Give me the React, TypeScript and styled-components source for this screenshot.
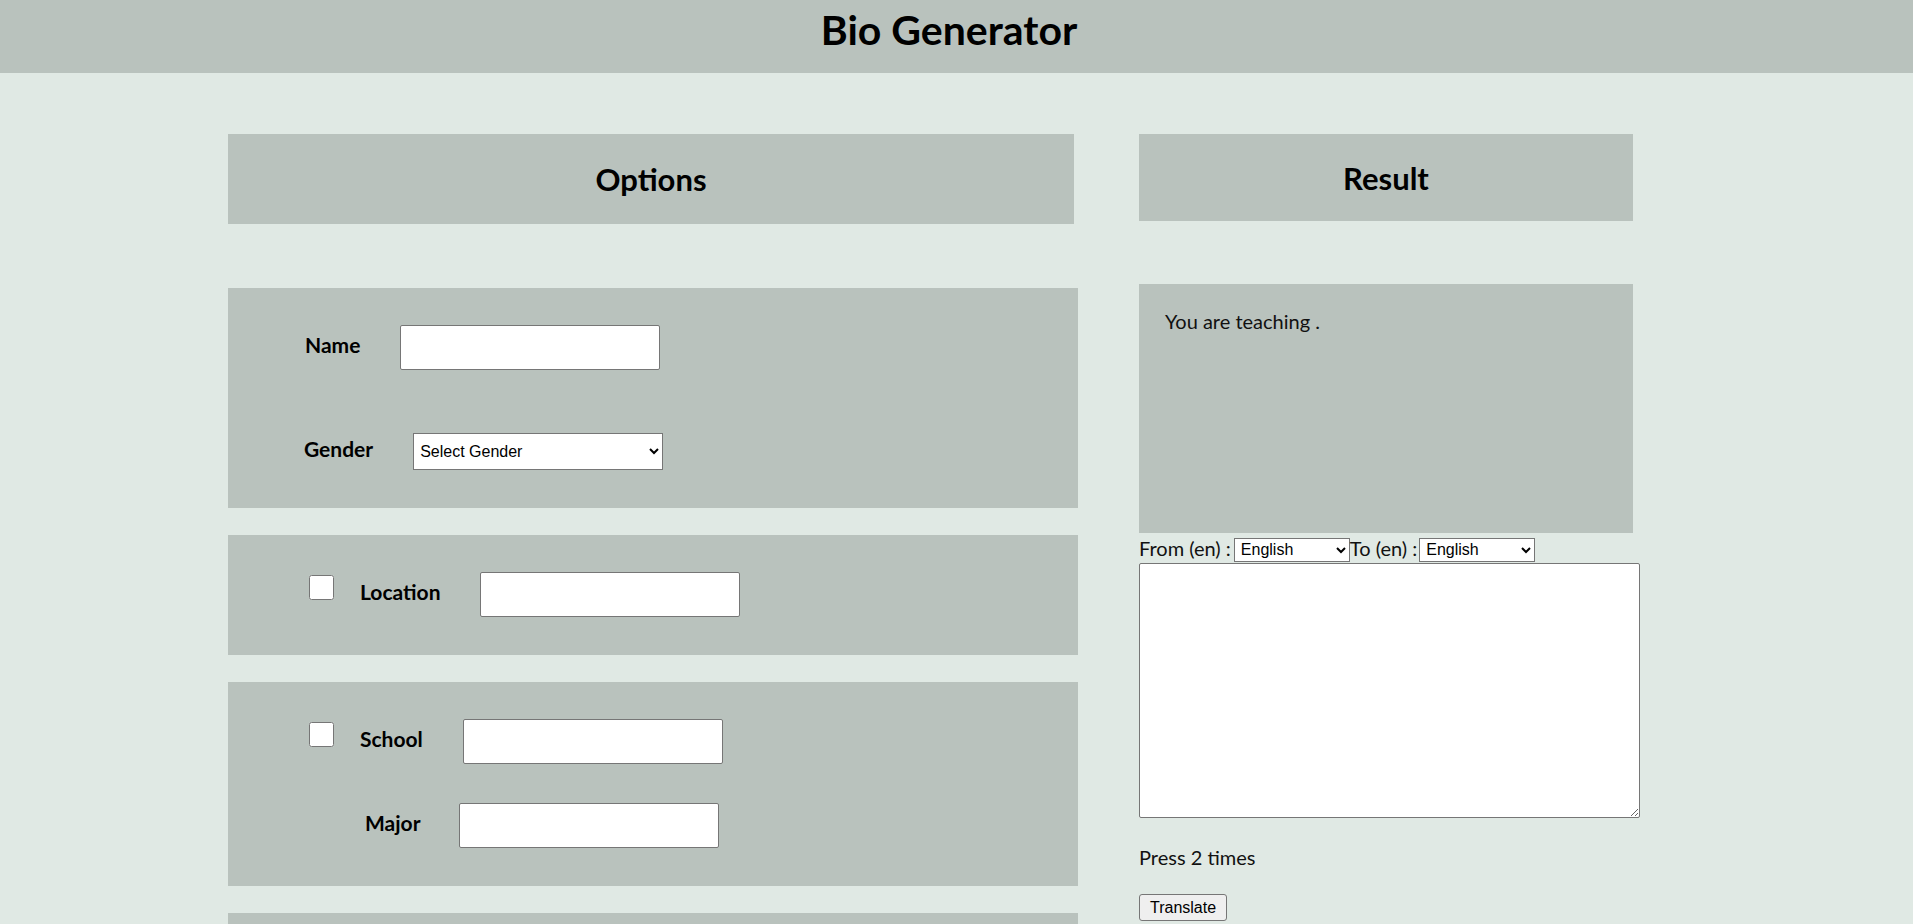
import React from "react";
import styled, { createGlobalStyle } from "styled-components";

const GlobalStyle = createGlobalStyle`
  html, body {
    margin: 0;
    padding: 0;
    background: #e0e9e4;
  }
  body {
    font-family: Lato, "Open Sans", sans-serif;
    color: #111;
  }
  * { box-sizing: border-box; }
`;

const Header = styled.header`
  height: 73px;
  background: #b9c2bd;
  display: flex;
  justify-content: center;
  align-items: flex-start;
  padding-right: 15px;
`;

const Title = styled.h1`
  margin: 0;
  padding-top: 5px;
  font-family: Lato, sans-serif;
  font-weight: 700;
  font-size: 41px;
  line-height: 50px;
  color: #000;
`;

const Main = styled.main`
  display: flex;
  align-items: flex-start;
  gap: 61px;
  padding: 61px 0 120px 228px;
`;

const LeftCol = styled.section`
  width: 850px;
  display: flex;
  flex-direction: column;
  gap: 27px;
`;

const RightCol = styled.section`
  width: 494px;
  display: flex;
  flex-direction: column;
  align-items: flex-start;
`;

const SectionHead = styled.h2<{ $w?: number; $h: number; $mb: number }>`
  margin: 0 0 ${(p) => p.$mb}px 0;
  width: ${(p) => (p.$w ? `${p.$w}px` : "100%")};
  height: ${(p) => p.$h}px;
  background: #b9c2bd;
  display: flex;
  align-items: center;
  justify-content: center;
  font-family: Lato, sans-serif;
  font-weight: 700;
  font-size: 31px;
  color: #000;
`;

const Panel = styled.div`
  background: #b9c2bd;
  padding: 37px 0 38px 0;
  display: flex;
  flex-direction: column;
`;

const Row = styled.div<{ $pl: number; $mt?: number }>`
  display: flex;
  align-items: center;
  padding-left: ${(p) => p.$pl}px;
  margin-top: ${(p) => p.$mt ?? 0}px;
`;

const Label = styled.label<{ $mr?: number }>`
  font-family: Lato, sans-serif;
  font-weight: 700;
  font-size: 21px;
  line-height: 26px;
  padding-bottom: 5px;
  color: #000;
  margin-right: ${(p) => p.$mr ?? 40}px;
`;

const TextInput = styled.input.attrs({ type: "text" })`
  width: 260px;
  height: 45px;
  border: 1px solid #767676;
  border-radius: 2px;
  background: #fff;
  margin: 0;
`;

const Select = styled.select<{ $w: number; $h: number }>`
  width: ${(p) => p.$w}px;
  height: ${(p) => p.$h}px;
  font-family: Arial, "Liberation Sans", sans-serif;
  font-size: 16px;
  color: #000;
  background: #fff;
  border: 1px solid #767676;
  border-radius: 0;
  margin: 0;
  padding: 0 2px;
`;

const Check = styled.input.attrs({ type: "checkbox" })`
  width: 25px;
  height: 25px;
  margin: 3px 26px 0 0;
  align-self: flex-start;
`;

const ResultBox = styled.div`
  width: 100%;
  height: 249px;
  background: #b9c2bd;
  padding: 24px 26px;
  font-size: 20px;
  line-height: 26px;
  color: #111;
`;

const LangRow = styled.div`
  display: flex;
  align-items: center;
  height: 29px;
  padding-top: 4px;
  font-size: 20px;
  color: #111;
  white-space: pre;
`;

const LangText = styled.span<{ $mr: number }>`
  margin-right: ${(p) => p.$mr}px;
  padding-bottom: 4px;
`;

const TextArea = styled.textarea`
  width: 501px;
  height: 255px;
  border: 1px solid #767676;
  border-radius: 2px;
  background: #fff;
  margin: 1px 0 0 0;
  resize: both;
`;

const Hint = styled.p`
  margin: 26px 0 24px;
  font-size: 20px;
  line-height: 26px;
  color: #111;
`;

const Button = styled.button`
  height: 27px;
  padding: 0 10px;
  font-family: Arial, "Liberation Sans", sans-serif;
  font-size: 16px;
  color: #000;
  background: #efefef;
  border: 1px solid #767676;
  border-radius: 3px;
`;

export default function App() {
  return (
    <>
      <GlobalStyle />
      <Header>
        <Title>Bio Generator</Title>
      </Header>
      <Main>
        <LeftCol>
          <SectionHead $w={846} $h={90} $mb={37}>
            Options
          </SectionHead>
          <Panel>
            <Row $pl={77}>
              <Label>Name</Label>
              <TextInput />
            </Row>
            <Row $pl={76} $mt={63}>
              <Label>Gender</Label>
              <Select $w={250} $h={37} defaultValue="">
                <option value="">Select Gender</option>
                <option value="m">Male</option>
                <option value="f">Female</option>
              </Select>
            </Row>
          </Panel>
          <Panel>
            <Row $pl={81}>
              <Check />
              <Label>Location</Label>
              <TextInput />
            </Row>
          </Panel>
          <Panel>
            <Row $pl={81}>
              <Check />
              <Label>School</Label>
              <TextInput />
            </Row>
            <Row $pl={137} $mt={39}>
              <Label $mr={39}>Major</Label>
              <TextInput />
            </Row>
          </Panel>
          <Panel>
            <Row $pl={81}>
              <Check />
              <Label>Work</Label>
              <TextInput />
            </Row>
            <Row $pl={137} $mt={39}>
              <Label $mr={39}>Position</Label>
              <TextInput />
            </Row>
          </Panel>
          <Panel>
            <Row $pl={81}>
              <Check />
              <Label>Teaching</Label>
              <TextInput />
            </Row>
          </Panel>
          <Panel>
            <Row $pl={81}>
              <Check />
              <Label>Hobby</Label>
              <TextInput />
            </Row>
          </Panel>
        </LeftCol>
        <RightCol>
          <SectionHead $h={87} $mb={63}>
            Result
          </SectionHead>
          <ResultBox>You are teaching .</ResultBox>
          <LangRow>
            <LangText $mr={3}>From (en) :</LangText>
            <Select $w={116} $h={24} defaultValue="en">
              <option value="en">English</option>
              <option value="fr">French</option>
            </Select>
            <LangText $mr={2}>To (en) :</LangText>
            <Select $w={116} $h={24} defaultValue="en">
              <option value="en">English</option>
              <option value="fr">French</option>
            </Select>
          </LangRow>
          <TextArea />
          <Hint>Press 2 times</Hint>
          <Button>Translate</Button>
        </RightCol>
      </Main>
    </>
  );
}
